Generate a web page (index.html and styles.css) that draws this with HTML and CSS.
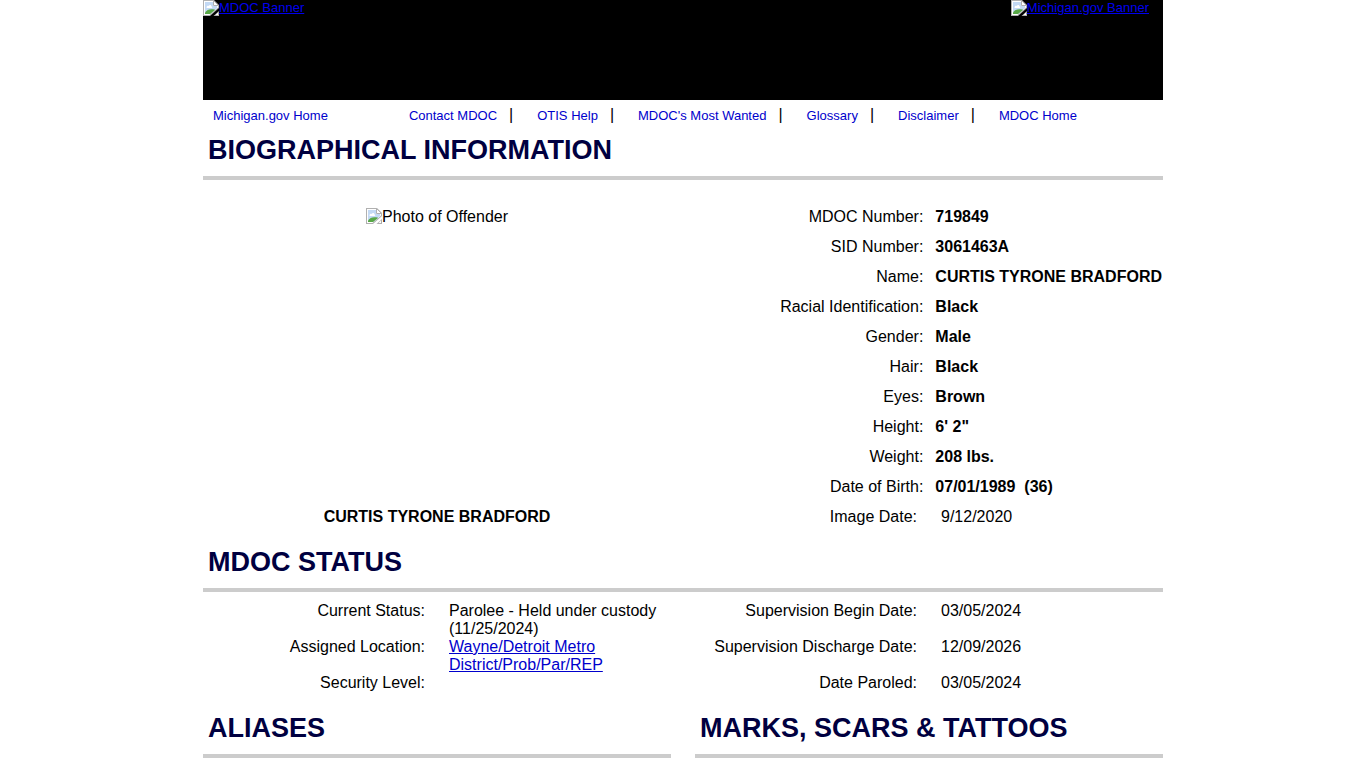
FILE: index.html
```html
<!DOCTYPE html>
<html lang="en">
<head>
    <meta charset="UTF-8">
    <meta name="viewport" content="width=device-width, initial-scale=1.0">
    <title>Offender Tracking Information System (OTIS) - Offender Profile</title>
    <link rel="stylesheet" href="styles.css">
</head>
<body>
    <!-- Missing picture icon, shared by the banners and the photo -->
    <svg class="icon-defs" aria-hidden="true">
        <symbol id="missing" viewBox="0 0 16 16">
            <path d="M0 0H11L16 5V8L7 16H0Z" fill="#b0b0b0"/>
            <path d="M1 1H10.500L15 5.500V7.500L6.500 15H1Z" fill="#fff"/>
            <path d="M2 2H10V6H14V8L7.500 14H2Z" fill="#c3d9f4"/>
            <path d="M3.500 7.500C3.500 6 5 5.500 5.700 6C6.500 4.500 8.500 5 8.500 6.500C9.500 6.500 9.500 8 8.500 8H4C3.500 8 3.500 7.800 3.500 7.500Z" fill="#fff"/>
            <path d="M2 14V12.500C4 9.500 7 8.500 11.500 9.500L12 10L7 14Z" fill="#58a846"/>
            <path d="M10.500 0.500V5.500H15.500Z" fill="#fff" stroke="#b0b0b0"/>
            <path d="M16 11V16H10.500Z" fill="#b0b0b0"/>
            <path d="M15 12.500V15H12.500Z" fill="#fff"/>
        </symbol>
    </svg>

    <div class="container">
        <header class="banner">
            <a href="#"><svg class="missing"><use href="#missing"/></svg>MDOC Banner</a>
            <a href="#" class="banner-state"><svg class="missing"><use href="#missing"/></svg>Michigan.gov Banner</a>
        </header>

        <nav class="nav">
            <a href="#" class="nav-home">Michigan.gov Home</a>
            <ul class="nav-links">
                <li><a href="#">Contact MDOC</a></li>
                <li><a href="#">OTIS Help</a></li>
                <li><a href="#">MDOC's Most Wanted</a></li>
                <li><a href="#">Glossary</a></li>
                <li><a href="#">Disclaimer</a></li>
                <li><a href="#">MDOC Home</a></li>
            </ul>
        </nav>

        <h1 class="title">BIOGRAPHICAL INFORMATION</h1>
        <section class="columns bio">
            <div class="photo">
                <div><svg class="missing"><use href="#missing"/></svg>Photo of Offender</div>
                <strong>CURTIS TYRONE BRADFORD</strong>
            </div>
            <div>
                <table class="facts">
                    <tr><th>MDOC Number:</th><td>719849</td></tr>
                    <tr><th>SID Number:</th><td>3061463A</td></tr>
                    <tr><th>Name:</th><td>CURTIS TYRONE BRADFORD</td></tr>
                    <tr><th>Racial Identification:</th><td>Black</td></tr>
                    <tr><th>Gender:</th><td>Male</td></tr>
                    <tr><th>Hair:</th><td>Black</td></tr>
                    <tr><th>Eyes:</th><td>Brown</td></tr>
                    <tr><th>Height:</th><td>6' 2"</td></tr>
                    <tr><th>Weight:</th><td>208 lbs.</td></tr>
                    <tr><th>Date of Birth:</th><td>07/01/1989 &nbsp;(36)</td></tr>
                </table>
                <dl class="pairs">
                    <dt>Image Date:</dt><dd>9/12/2020</dd>
                </dl>
            </div>
        </section>

        <h1 class="title">MDOC STATUS</h1>
        <dl class="pairs status">
            <dt>Current Status:</dt><dd>Parolee - Held under custody (11/25/2024)</dd>
            <dt>Supervision Begin Date:</dt><dd>03/05/2024</dd>
            <dt>Assigned Location:</dt><dd><a href="#">Wayne/Detroit Metro District/Prob/Par/REP</a></dd>
            <dt>Supervision Discharge Date:</dt><dd>12/09/2026</dd>
            <dt>Security Level:</dt><dd></dd>
            <dt>Date Paroled:</dt><dd>03/05/2024</dd>
        </dl>

        <div class="columns">
            <h1 class="title">ALIASES</h1>
            <h1 class="title">MARKS, SCARS &amp; TATTOOS</h1>
        </div>
    </div>
</body>
</html>
```
FILE: styles.css
```css
body {
    margin: 0;
    font-family: Arial, "Liberation Sans", sans-serif;
    font-size: 16px;
    line-height: 18px;
    color: #000;
    background-color: #fff;
}
a {
    color: #0000cc;
}
.container {
    max-width: 960px;
    margin: 0 auto;
}
.icon-defs {
    display: none;
}
.missing {
    width: 16px;
    height: 16px;
    vertical-align: top;
}

/* Banner */
.banner {
    display: flex;
    justify-content: space-between;
    min-height: 100px;
    background-color: #000;
    font-size: 13px;
    line-height: 16px;
}
.banner a {
    color: #0000ee;
}
.banner-state {
    padding-right: 14px;
}

/* Navigation */
.nav {
    display: flex;
    align-items: baseline;
    gap: 81px;
    padding: 6px 10px;
}
.nav a {
    font-size: 13px;
    line-height: 16px;
    text-decoration: none;
}
.nav-links {
    display: flex;
    flex-wrap: wrap;
    margin: 0;
    padding: 0;
    list-style: none;
}
.nav-links li + li::before {
    content: "|";
    margin: 0 24px 0 12px;
}

.title {
    margin: 0;
    padding: 0 5px 6px;
    border-bottom: 4px solid #ccc;
    font-size: 27px;
    line-height: 40px;
    color: #000040;
}
.columns {
    display: grid;
    grid-template-columns: 1fr 1fr;
    gap: 24px;
}

/* Biographical information */
.bio {
    padding: 28px 0 16px;
}
.photo {
    display: flex;
    flex-direction: column;
    justify-content: space-between;
    text-align: center;
}
.facts {
    width: 100%;
    border-collapse: collapse;
}
.facts th,
.facts td {
    height: 18px;
    padding: 0 1px 12px 0;
    white-space: nowrap;
}
.facts th {
    width: 100%;
    padding-right: 12px;
    text-align: right;
    font-weight: normal;
}
.facts td {
    font-weight: bold;
}

.pairs {
    display: grid;
    grid-template-columns: repeat(2, 1fr);
    column-gap: 24px;
    margin: 0;
}
.pairs dt {
    text-align: right;
}
.pairs dd {
    margin: 0;
}

/* Status */
.status {
    grid-template-columns: repeat(4, 1fr);
    padding: 10px 0 16px;
}
```
